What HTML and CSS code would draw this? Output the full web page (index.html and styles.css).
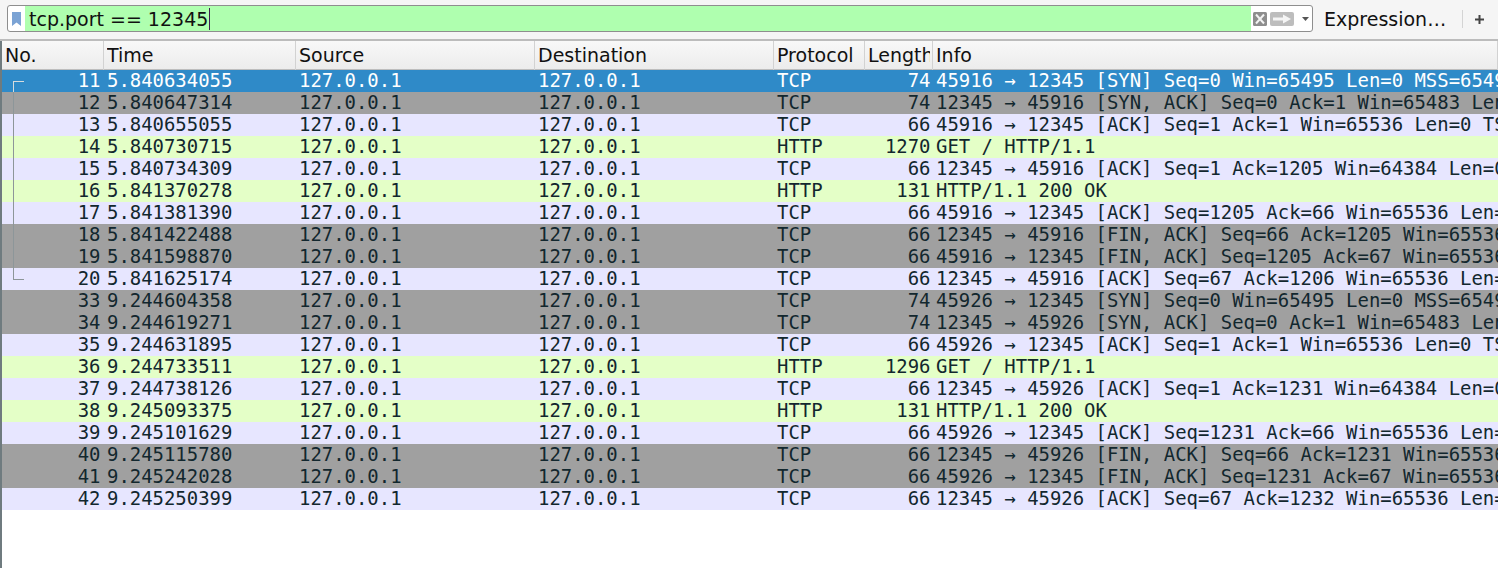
FILE: index.html
```html
<!DOCTYPE html>
<html lang="en">
<head>
<meta charset="utf-8">
<title>Wireshark</title>
<link rel="stylesheet" href="styles.css">
</head>
<body>
<div class="window">
  <div class="toolbar">
    <div class="filter">
      <div class="bookmark"><svg width="9" height="14" viewBox="0 0 9 14"><path d="M0 0H9V14L4.5 10.5L0 14Z" fill="#7ba3d4"/></svg></div>
      <div class="filter-text"><span>tcp.port == 12345</span><i class="caret"></i></div>
      <div class="filter-icons">
        <svg class="ic-clear" width="14" height="14" viewBox="0 0 14 14"><rect width="14" height="14" rx="1.5" fill="#8d8d8d"/><path d="M3 2.5L11 11.5M11 2.5L3 11.5" stroke="#f2f2f2" stroke-width="2"/></svg>
        <svg class="ic-apply" width="24" height="14" viewBox="0 0 24 14"><rect width="24" height="14" rx="2" fill="#bdbdbd"/><path d="M3 5.5H13V2.5L21 7L13 11.5V8.5H3Z" fill="#f5f5f5"/></svg>
        <svg class="ic-drop" width="7" height="4" viewBox="0 0 7 4"><path d="M0 0H7L3.5 4Z" fill="#555"/></svg>
      </div>
    </div>
    <div class="expr">Expression…</div>
    <div class="sep"></div>
    <svg class="plus" width="9" height="9" viewBox="0 0 9 9"><path d="M4.5 0V9M0 4.5H9" stroke="#444" stroke-width="2"/></svg>
  </div>
  <div class="packets">
    <div class="row head"><div>No.</div><div>Time</div><div>Source</div><div>Destination</div><div>Protocol</div><div>Length</div><div>Info</div></div>
    <div class="row sel conv-start"><div class="no">11</div><div>5.840634055</div><div>127.0.0.1</div><div>127.0.0.1</div><div>TCP</div><div class="num">74</div><div>45916 → 12345 [SYN] Seq=0 Win=65495 Len=0 MSS=65495 SACK_PERM=1</div></div>
    <div class="row gray conv-mid"><div class="no">12</div><div>5.840647314</div><div>127.0.0.1</div><div>127.0.0.1</div><div>TCP</div><div class="num">74</div><div>12345 → 45916 [SYN, ACK] Seq=0 Ack=1 Win=65483 Len=0 MSS=65495</div></div>
    <div class="row tcp conv-mid"><div class="no">13</div><div>5.840655055</div><div>127.0.0.1</div><div>127.0.0.1</div><div>TCP</div><div class="num">66</div><div>45916 → 12345 [ACK] Seq=1 Ack=1 Win=65536 Len=0 TSval=1</div></div>
    <div class="row http conv-mid"><div class="no">14</div><div>5.840730715</div><div>127.0.0.1</div><div>127.0.0.1</div><div>HTTP</div><div class="num">1270</div><div>GET / HTTP/1.1</div></div>
    <div class="row tcp conv-mid"><div class="no">15</div><div>5.840734309</div><div>127.0.0.1</div><div>127.0.0.1</div><div>TCP</div><div class="num">66</div><div>12345 → 45916 [ACK] Seq=1 Ack=1205 Win=64384 Len=0 TSval=1</div></div>
    <div class="row http conv-mid"><div class="no">16</div><div>5.841370278</div><div>127.0.0.1</div><div>127.0.0.1</div><div>HTTP</div><div class="num">131</div><div>HTTP/1.1 200 OK</div></div>
    <div class="row tcp conv-mid"><div class="no">17</div><div>5.841381390</div><div>127.0.0.1</div><div>127.0.0.1</div><div>TCP</div><div class="num">66</div><div>45916 → 12345 [ACK] Seq=1205 Ack=66 Win=65536 Len=0 TSval=1</div></div>
    <div class="row gray conv-mid"><div class="no">18</div><div>5.841422488</div><div>127.0.0.1</div><div>127.0.0.1</div><div>TCP</div><div class="num">66</div><div>12345 → 45916 [FIN, ACK] Seq=66 Ack=1205 Win=65536 Len=0</div></div>
    <div class="row gray conv-mid"><div class="no">19</div><div>5.841598870</div><div>127.0.0.1</div><div>127.0.0.1</div><div>TCP</div><div class="num">66</div><div>45916 → 12345 [FIN, ACK] Seq=1205 Ack=67 Win=65536 Len=0</div></div>
    <div class="row tcp conv-end"><div class="no">20</div><div>5.841625174</div><div>127.0.0.1</div><div>127.0.0.1</div><div>TCP</div><div class="num">66</div><div>12345 → 45916 [ACK] Seq=67 Ack=1206 Win=65536 Len=0 TSval=1</div></div>
    <div class="row gray"><div class="no">33</div><div>9.244604358</div><div>127.0.0.1</div><div>127.0.0.1</div><div>TCP</div><div class="num">74</div><div>45926 → 12345 [SYN] Seq=0 Win=65495 Len=0 MSS=65495 SACK_PERM=1</div></div>
    <div class="row gray"><div class="no">34</div><div>9.244619271</div><div>127.0.0.1</div><div>127.0.0.1</div><div>TCP</div><div class="num">74</div><div>12345 → 45926 [SYN, ACK] Seq=0 Ack=1 Win=65483 Len=0 MSS=65495</div></div>
    <div class="row tcp"><div class="no">35</div><div>9.244631895</div><div>127.0.0.1</div><div>127.0.0.1</div><div>TCP</div><div class="num">66</div><div>45926 → 12345 [ACK] Seq=1 Ack=1 Win=65536 Len=0 TSval=1</div></div>
    <div class="row http"><div class="no">36</div><div>9.244733511</div><div>127.0.0.1</div><div>127.0.0.1</div><div>HTTP</div><div class="num">1296</div><div>GET / HTTP/1.1</div></div>
    <div class="row tcp"><div class="no">37</div><div>9.244738126</div><div>127.0.0.1</div><div>127.0.0.1</div><div>TCP</div><div class="num">66</div><div>12345 → 45926 [ACK] Seq=1 Ack=1231 Win=64384 Len=0 TSval=1</div></div>
    <div class="row http"><div class="no">38</div><div>9.245093375</div><div>127.0.0.1</div><div>127.0.0.1</div><div>HTTP</div><div class="num">131</div><div>HTTP/1.1 200 OK</div></div>
    <div class="row tcp"><div class="no">39</div><div>9.245101629</div><div>127.0.0.1</div><div>127.0.0.1</div><div>TCP</div><div class="num">66</div><div>45926 → 12345 [ACK] Seq=1231 Ack=66 Win=65536 Len=0 TSval=1</div></div>
    <div class="row gray"><div class="no">40</div><div>9.245115780</div><div>127.0.0.1</div><div>127.0.0.1</div><div>TCP</div><div class="num">66</div><div>12345 → 45926 [FIN, ACK] Seq=66 Ack=1231 Win=65536 Len=0</div></div>
    <div class="row gray"><div class="no">41</div><div>9.245242028</div><div>127.0.0.1</div><div>127.0.0.1</div><div>TCP</div><div class="num">66</div><div>45926 → 12345 [FIN, ACK] Seq=1231 Ack=67 Win=65536 Len=0</div></div>
    <div class="row tcp"><div class="no">42</div><div>9.245250399</div><div>127.0.0.1</div><div>127.0.0.1</div><div>TCP</div><div class="num">66</div><div>12345 → 45926 [ACK] Seq=67 Ack=1232 Win=65536 Len=0 TSval=1</div></div>
  </div>
</div>
</body>
</html>
```
FILE: styles.css
```css
html, body { margin: 0; padding: 0; height: 100%; background: #fff; overflow: hidden; }
.window { height: 568px; display: flex; flex-direction: column; }

.toolbar {
  height: 41px; box-sizing: border-box; padding: 5px 0 0 7px;
  display: flex; align-items: flex-start;
  background: #f5f5f5; border-bottom: 2px solid #bcbcbc;
  font-family: "DejaVu Sans", sans-serif; color: #111;
}
.filter {
  width: 1306px; height: 27px; box-sizing: border-box;
  display: flex; background: #fff;
  border: 1px solid #8e8e8e; border-radius: 3px; overflow: hidden;
}
.bookmark { width: 17px; flex: none; display: flex; align-items: center; padding-left: 4px; box-sizing: border-box; }
.filter-text {
  flex: 1; background: #afffaf; display: flex; align-items: center;
  padding-left: 4px; font-size: 19px; line-height: 27px; color: #111;
}
.filter-text span { position: relative; top: 1px; }
.caret { width: 1px; height: 22px; background: #402050; margin-left: 1px; }
.filter-icons { width: 61px; flex: none; display: flex; align-items: center; }
.ic-clear { margin-left: 2px; }
.ic-apply { margin-left: 3px; }
.ic-drop { margin-left: 8px; }
.expr { margin-left: 11px; font-size: 19px; line-height: 28px; width: 138px; flex: none; white-space: nowrap; }
.sep { width: 1px; height: 18px; margin-top: 5px; background: #d4d4d4; }
.plus { margin-left: 12px; margin-top: 10px; flex: none; }

.packets {
  flex: 1; overflow: hidden;
  border-left: 2px solid #6f7b7f;
  font-family: "DejaVu Sans Mono", monospace; font-size: 18.93px;
}
.row {
  display: grid; height: 22px; line-height: 20px;
  grid-template-columns: 102px 192px 239px 239px 91px 68px 1fr;
  white-space: nowrap; color: #12272e; position: relative;
}
.row > div { overflow: hidden; padding-left: 3px; }
.row .no, .row .num { text-align: right; padding-left: 0; padding-right: 3.5px; }
.row .num { padding-right: 2.5px; }

.head {
  height: 28px; line-height: 29px; color: #111;
  font-family: "DejaVu Sans", sans-serif; font-size: 19px;
  background: linear-gradient(#f8f8f8, #ececec);
  border-bottom: 1px solid #bdbdbd; box-sizing: content-box;
}
.head > div {
  border-right: 1px solid #d2d2d2; box-sizing: border-box; padding: 0 2px 0 3px;
  overflow: clip; overflow-clip-margin: content-box;
}
.sel { background: #2f8ac8; color: #fff; }
.gray { background: #a0a0a0; }
.tcp { background: #e7e6ff; }
.http { background: #e4ffc7; }

.conv-start .no, .conv-mid .no, .conv-end .no { position: relative; }
.conv-start .no::before { content: ""; position: absolute; left: 11px; top: 11px; bottom: 0; width: 10px; border-left: 1px solid #d7dcdd; border-top: 1px solid #d7dcdd; }
.conv-mid .no::before { content: ""; position: absolute; left: 11px; top: 0; bottom: 0; border-left: 1px solid #8d9699; }
.conv-end .no::before { content: ""; position: absolute; left: 11px; top: 0; height: 11px; width: 10px; border-left: 1px solid #8d9699; border-bottom: 1px solid #8d9699; }
```
